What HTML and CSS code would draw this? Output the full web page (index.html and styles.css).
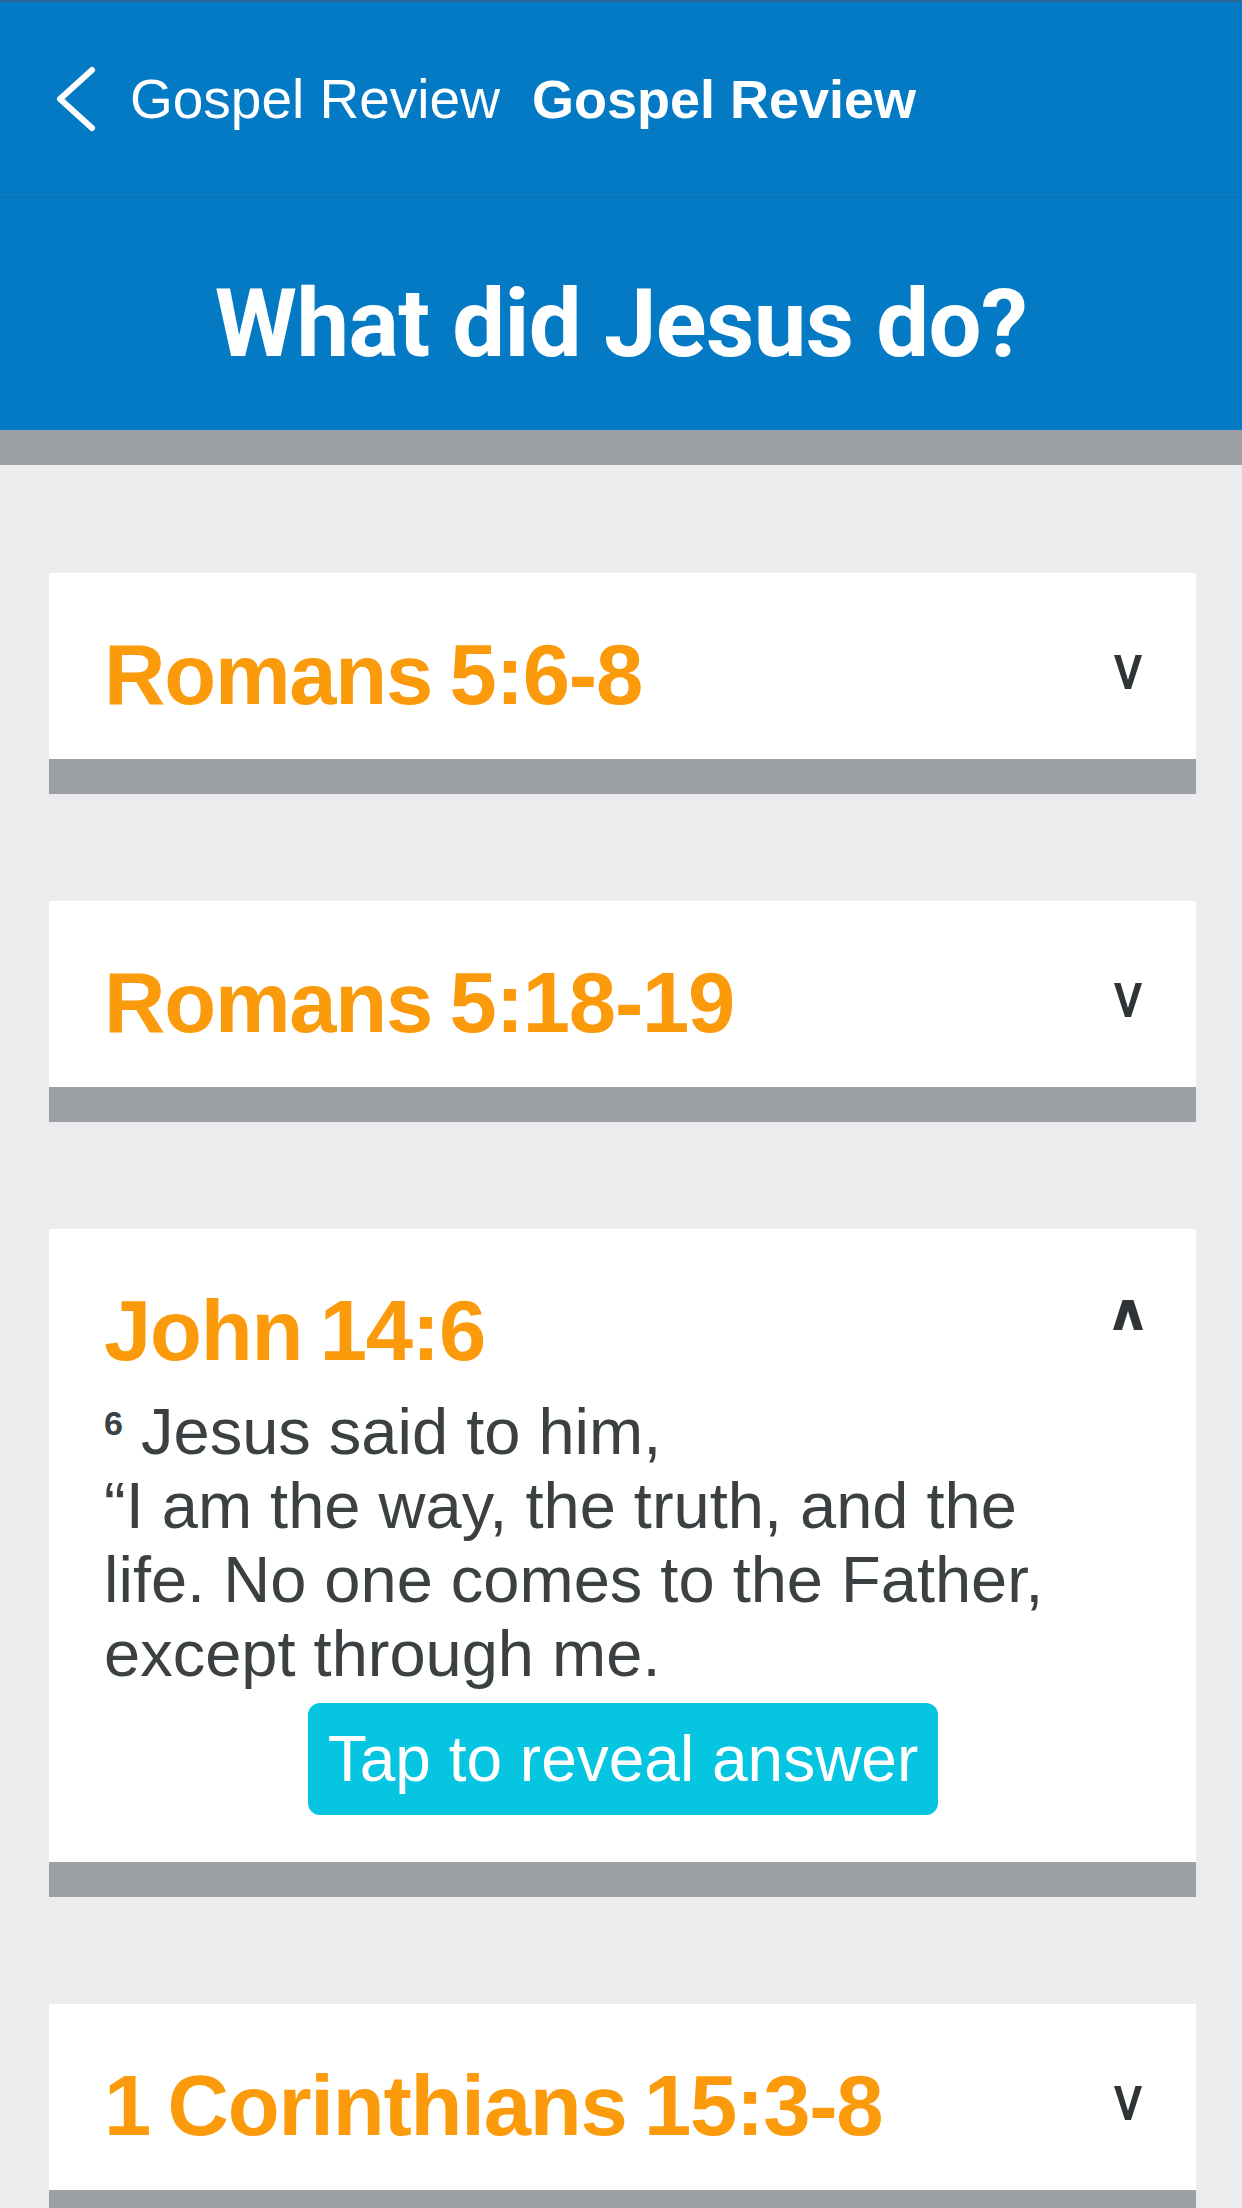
FILE: index.html
```html
<!DOCTYPE html>
<html lang="en">
<head>
<meta charset="utf-8">
<title>Gospel Review</title>
<link rel="stylesheet" href="styles.css">
</head>
<body>
<div class="app">
  <header class="nav">
    <svg class="back" width="40" height="66" viewBox="0 0 40 66" aria-hidden="true">
      <polyline points="36,4 4,33 36,62" fill="none" stroke="#ffffff" stroke-width="6" stroke-linecap="round" stroke-linejoin="round"/>
    </svg>
    <span class="nav-back">Gospel Review</span>
    <span class="nav-title">Gospel Review</span>
  </header>
  <section class="hero">
    <h1 class="hero-title">What did Jesus do?</h1>
  </section>
  <div class="hero-rule"></div>

  <main class="list">
    <article class="card">
      <div class="card-head">
        <h2 class="card-title">Romans 5:6-8</h2>
        <svg class="chev chev-down" width="28" height="34" viewBox="0 0 28 34" aria-hidden="true">
          <polygon points="0,0 6.5,0 14,25 21.5,0 28,0 17,34 11,34" fill="#2f3437"/>
        </svg>
      </div>
    </article>

    <article class="card">
      <div class="card-head">
        <h2 class="card-title">Romans 5:18-19</h2>
        <svg class="chev chev-down" width="28" height="34" viewBox="0 0 28 34" aria-hidden="true">
          <polygon points="0,0 6.5,0 14,25 21.5,0 28,0 17,34 11,34" fill="#2f3437"/>
        </svg>
      </div>
    </article>

    <article class="card card-open">
      <div class="card-head">
        <h2 class="card-title">John 14:6</h2>
        <svg class="chev chev-up" width="30" height="30" viewBox="0 0 30 30" aria-hidden="true">
          <polygon points="9.5,0 20.5,0 30,30 21,30 15,11 9,30 0,30" fill="#2f3437"/>
        </svg>
      </div>
      <p class="verse"><span class="vnum">6</span> Jesus said to him,<br>“I am the way, the truth, and the<br>life. No one comes to the Father,<br>except through me.</p>
      <button class="reveal" type="button">Tap to reveal answer</button>
    </article>

    <article class="card">
      <div class="card-head">
        <h2 class="card-title">1 Corinthians 15:3-8</h2>
        <svg class="chev chev-down" width="28" height="34" viewBox="0 0 28 34" aria-hidden="true">
          <polygon points="0,0 6.5,0 14,25 21.5,0 28,0 17,34 11,34" fill="#2f3437"/>
        </svg>
      </div>
    </article>
  </main>
</div>
</body>
</html>
```

FILE: styles.css
```css
html, body {
  margin: 0;
  padding: 0;
  overflow: hidden;
}

body {
  background: #eaeced;
  font-family: "Liberation Sans", Arial, sans-serif;
}

.app {
  width: 1242px;
  min-height: 2208px;
}

.nav {
  box-sizing: border-box;
  height: 198px;
  background: #037ac3;
  border-top: 2px solid #2b6796;
  border-bottom: 2px solid #0a73b8;
  display: flex;
  align-items: center;
  padding-left: 56px;
  color: #ffffff;
}

.back {
  display: block;
  margin-right: 34px;
}

.nav-back {
  font-size: 55px;
  line-height: 1;
  font-weight: 400;
}

.nav-title {
  font-size: 54px;
  line-height: 1;
  font-weight: 700;
  margin-left: 32px;
}

.hero {
  box-sizing: border-box;
  height: 232px;
  background: #037ac3;
  display: flex;
  justify-content: center;
  padding-top: 79px;
}

.hero-title {
  margin: 0;
  font-family: Roboto, "Liberation Sans", sans-serif;
  font-weight: 700;
  font-size: 94px;
  line-height: 94px;
  color: #ffffff;
  letter-spacing: -0.6px;
}

.hero-rule {
  height: 35px;
  background: #9c9fa3;
}

.list {
  display: flex;
  flex-direction: column;
  gap: 107px;
  padding: 108px 46px 0 49px;
}

.card {
  background: #ffffff;
  border-bottom: 35px solid #9c9fa3;
  padding: 52px 54px 34px 55px;
}

.card-open {
  padding-bottom: 47px;
}

.card-head {
  display: flex;
  justify-content: space-between;
  align-items: flex-start;
}

.card-title {
  margin: 0;
  font-family: "Liberation Sans", Arial, sans-serif;
  font-weight: 700;
  font-size: 85px;
  line-height: 100px;
  letter-spacing: -1.2px;
  word-spacing: -5px;
  color: #fb9a0b;
}

.chev {
  display: block;
  flex: none;
}

.chev-down {
  margin-top: 30px;
}

.chev-up {
  margin-top: 19px;
  margin-right: -1px;
}

.verse {
  margin: 14px 0 0;
  font-size: 65px;
  line-height: 74px;
  color: #3b4043;
}

.vnum {
  font-size: 34px;
  font-weight: 700;
  line-height: 0;
  vertical-align: 19px;
}

.reveal {
  display: block;
  margin: 12px auto 0;
  height: 112px;
  padding: 0 20px;
  border: none;
  border-radius: 12px;
  background: #05c5e0;
  color: #ffffff;
  font-family: "Liberation Sans", Arial, sans-serif;
  font-size: 64px;
  line-height: 112px;
}
```
